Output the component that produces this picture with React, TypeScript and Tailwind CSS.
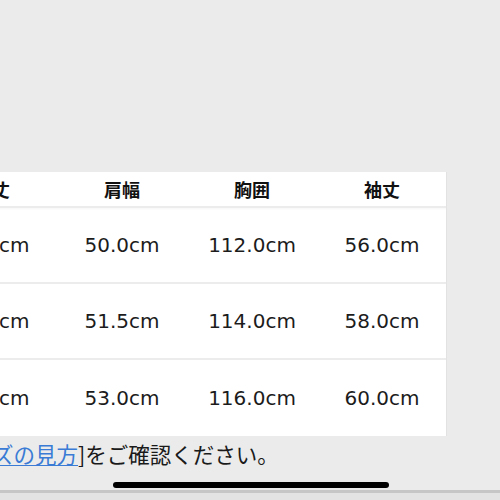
// Size chart screenshot - cropped table with footnote

const headers = ["着丈", "肩幅", "胸囲", "袖丈"];

const rows = [
  ["70.0cm", "50.0cm", "112.0cm", "56.0cm"],
  ["72.0cm", "51.5cm", "114.0cm", "58.0cm"],
  ["74.0cm", "53.0cm", "116.0cm", "60.0cm"],
];

const cjk = "font-['Noto_Sans_CJK_JP','Noto_Sans',sans-serif]";

export default function App() {
  return (
    <div className="flex h-[500px] w-[500px] flex-col overflow-hidden bg-[#ebebeb]">
      {/* empty area above the table */}
      <div className="h-[172px] shrink-0" />

      {/* size table, left side cut off */}
      <div className="w-[447px] shrink-0 overflow-hidden border-r border-[#e2e2e2] bg-white">
        <div className="ml-[-73px] w-[520px]">
          <div className="grid h-[36px] grid-cols-4 items-center border-b-2 border-[#ececec] shadow-[0_1px_2px_rgba(0,0,0,0.04)]">
            {headers.map((h) => (
              <div
                key={h}
                className={`${cjk} text-center text-[18px] font-bold leading-none text-[#111]`}
              >
                {h}
              </div>
            ))}
          </div>
          {rows.map((r, i) => (
            <div
              key={i}
              className={`grid h-[76px] grid-cols-4 items-center ${
                i < rows.length - 1 ? "border-b-2 border-[#ececec]" : ""
              }`}
            >
              {r.map((v, j) => (
                <div
                  key={j}
                  className="text-center font-['DejaVu_Sans',sans-serif] text-[20px] leading-none text-[#1c1c1c]"
                >
                  {v}
                </div>
              ))}
            </div>
          ))}
        </div>
      </div>

      {/* footnote */}
      <div
        className={`${cjk} ml-[-8px] mt-[4px] whitespace-nowrap text-[21.5px] leading-[28px] text-[#1a1a1a]`}
      >
        <span className="text-[#3a7bd5] underline decoration-1 underline-offset-2">
          ズの見方
        </span>
        ]をご確認ください。
      </div>

      {/* home indicator */}
      <div className="mt-[14px] flex justify-center">
        <div className="ml-[1px] h-[6px] w-[276px] rounded-full bg-black" />
      </div>

      {/* bottom edge */}
      <div className="mt-[2px] flex-1 border-t-[3px] border-[#c6c6c6] bg-[#e3e3e3]" />
    </div>
  );
}
